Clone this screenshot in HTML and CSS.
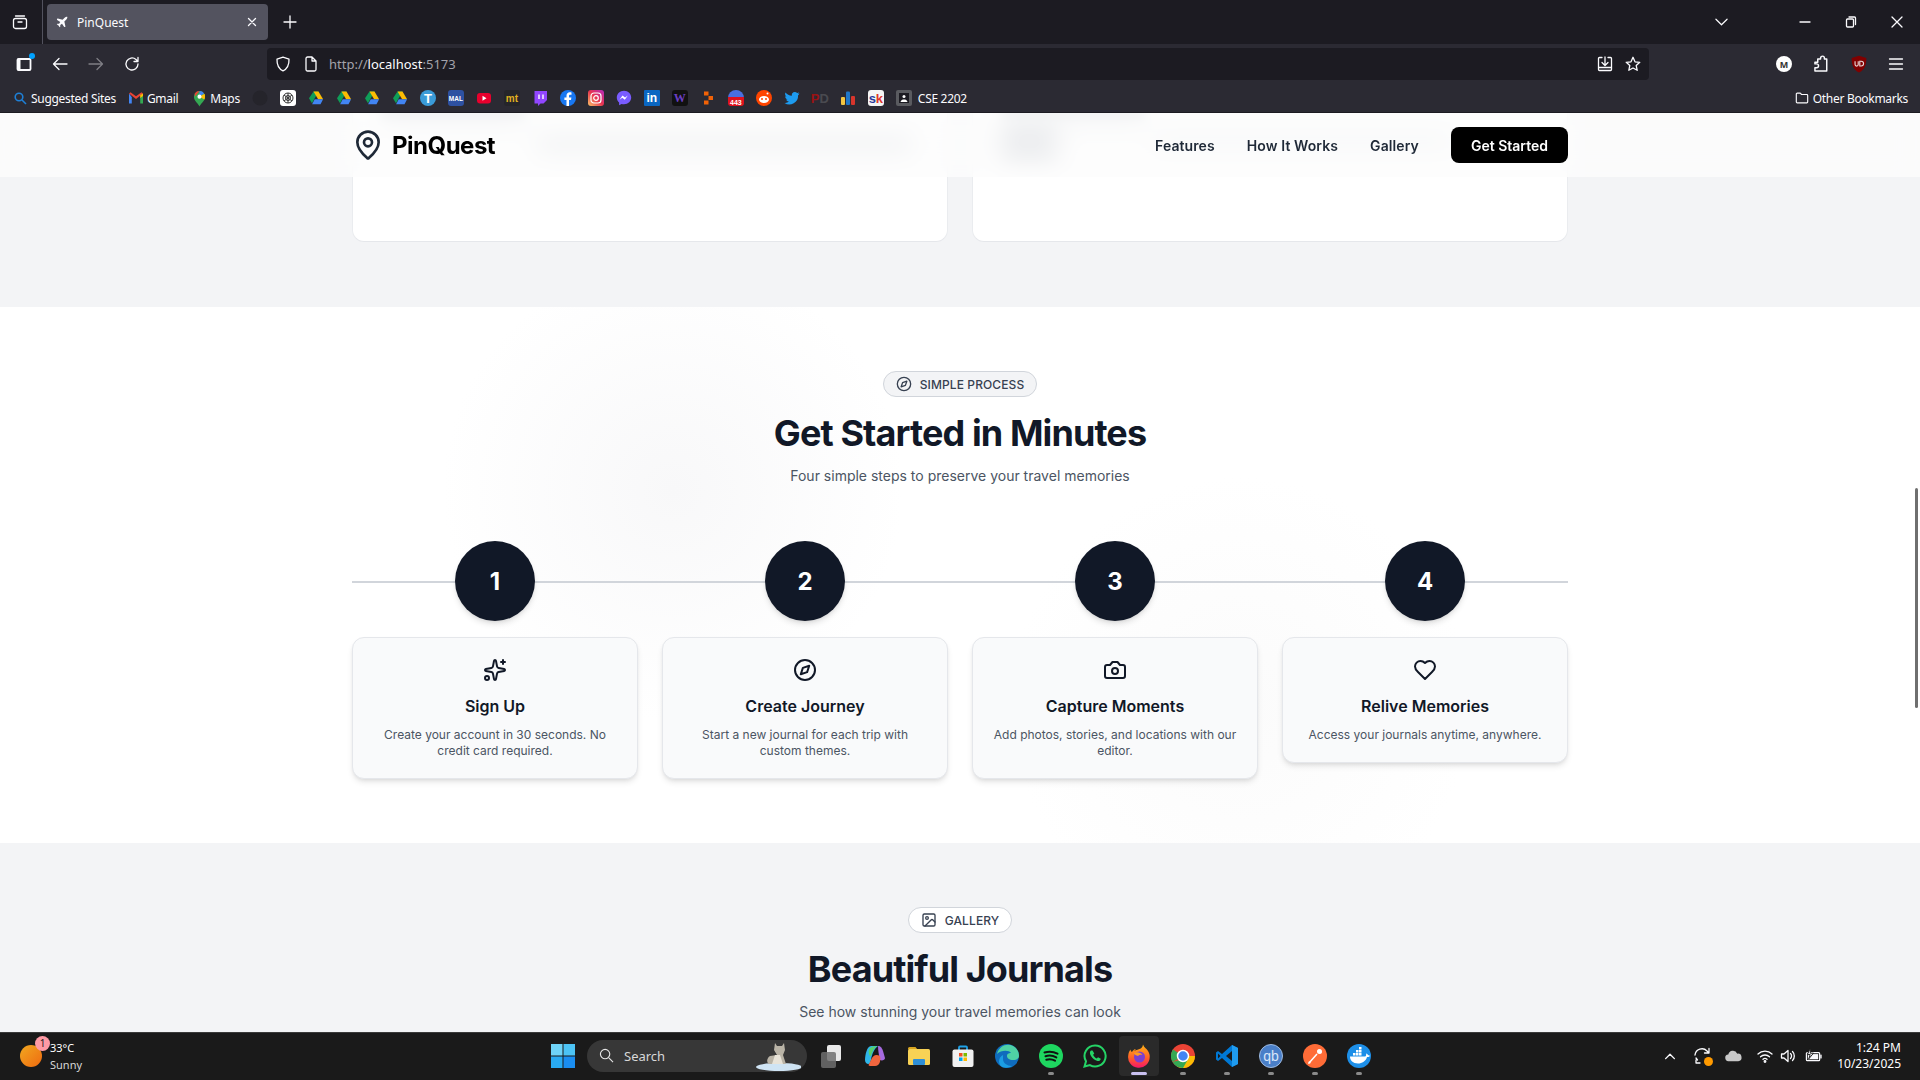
FILE: index.html
```html
<!DOCTYPE html>
<html lang="en">
<head>
<meta charset="utf-8">
<title>PinQuest</title>
<link rel="stylesheet" href="styles.css">
</head>
<body>
<svg class="defs" aria-hidden="true">
  <symbol id="drive" viewBox="0 0 16 16">
    <path d="M5.5 1.5h5L6.6 8.6 4 13.2 1 8.2z" fill="#0f9d58"/>
    <path d="M5.5 1.5h5l4.6 7.7h-5z" fill="#fbbc04"/>
    <path d="M4.1 14.2l2.6-5h8.4l-2.6 5z" fill="#4285f4"/>
  </symbol>
  <symbol id="compass" viewBox="0 0 24 24"><circle cx="12" cy="12" r="10"/><path d="m16.24 7.76-2.12 6.36-6.36 2.12 2.12-6.36 6.36-2.12z"/></symbol>
</svg>

<header class="browser">
  <div class="tabstrip">
    <div class="tablist-btn">
      <svg class="ico16 line" viewBox="0 0 16 16"><rect x="1.5" y="4.5" width="13" height="10" rx="2"/><path d="M3.5 2h9M6 8h4"/></svg>
    </div>
    <div class="tab">
      <svg class="ico14 solid" viewBox="0 0 24 24"><path d="M17.8 19.2 16 11l3.5-3.5C21 6 21.5 4 21 3c-1-.5-3 0-4.5 1.5L13 8 4.8 6.2c-.5-.1-.9.1-1.1.5l-.3.5c-.2.5-.1 1 .3 1.3L9 12l-2 3H4l-1 1 3 2 2 3 1-1v-3l3-2 3.5 5.3c.3.4.8.5 1.3.3l.5-.2c.4-.3.6-.7.5-1.2z"/></svg>
      <span class="tab-title">PinQuest</span>
      <svg class="tab-close line" viewBox="0 0 10 10"><path d="M1.5 1.5l7 7M8.5 1.5l-7 7"/></svg>
    </div>
    <svg class="tab-new line" viewBox="0 0 14 14"><path d="M7 1v12M1 7h12"/></svg>
    <div class="win-controls">
      <svg class="tabs-chevron line" viewBox="0 0 14 8"><path d="M1 1l6 6 6-6"/></svg>
      <svg class="wc wc-min line" viewBox="0 0 12 12"><path d="M1 6h10"/></svg>
      <svg class="wc wc-restore line" viewBox="0 0 12 12"><rect x="1.5" y="3" width="7" height="8" rx="1"/><path d="M4 1h5.5a1 1 0 0 1 1 1v6.5"/></svg>
      <svg class="wc wc-close line" viewBox="0 0 12 12"><path d="M1 1l10 10M11 1L1 11"/></svg>
    </div>
  </div>

  <div class="toolbar">
    <div class="nav-btns">
      <span class="tb-slot sidebar-wrap">
        <svg class="ico16 line thick" viewBox="0 0 16 16"><rect x="1.5" y="3" width="13" height="11" rx="1"/><path d="M3 4v9" class="thick-bar"/></svg>
        <i class="blue-dot"></i>
      </span>
      <span class="tb-slot"><svg class="ico16 line" viewBox="0 0 16 16"><path d="M15 8H1.5M7 2.5L1.5 8 7 13.5"/></svg></span>
      <span class="tb-slot dim"><svg class="ico16 line" viewBox="0 0 16 16"><path d="M1 8h13.5M9 2.5L14.5 8 9 13.5"/></svg></span>
      <span class="tb-slot"><svg class="ico16 line" viewBox="0 0 16 16"><path d="M14 8a6 6 0 1 1-2-4.5L14 5.5M14 1.5v4h-4"/></svg></span>
    </div>
    <div class="urlbar">
      <svg class="ico16 line url-shield" viewBox="0 0 16 16"><path d="M8 1.2l6 2c.2 5.5-1.5 9.500-6 11.600C3.500 12.700 1.800 8.700 2 3.200z"/></svg>
      <svg class="ico16 line url-doc" viewBox="0 0 16 16"><path d="M3 2.500A1.500 1.500 0 0 1 4.500 1H9l4 4v8.500a1.500 1.500 0 0 1-1.500 1.500h-7A1.500 1.500 0 0 1 3 13.500zM9 1v4h4"/></svg>
      <span class="url-text"><span class="url-dim">http://</span>localhost<span class="url-dim">:5173</span></span>
      <svg class="ico16 line url-download" viewBox="0 0 16 16"><path d="M5 1.500H2.500a1 1 0 0 0-1 1v11a1 1 0 0 0 1 1h11a1 1 0 0 0 1-1v-11a1 1 0 0 0-1-1H11M8 1v8M5 6.500L8 9.500l3-3M1.500 11.500h13"/></svg>
      <svg class="ico16 line url-star" viewBox="0 0 16 16"><path d="M8 1.300l2 4.500 4.800.5-3.600 3.200 1 4.800L8 12l-4.200 2.300 1-4.800L1.200 6.300 6 5.800z"/></svg>
    </div>
    <div class="tb-right">
      <span class="tb-icon"><span class="m-badge">M</span></span>
      <span class="tb-icon"><svg class="ico18 line tb-puzzle" viewBox="0 0 16 16"><path d="M6 3.500h2.500V2.700a1.700 1.700 0 0 1 3.400 0v.8H14v10.800H3.500v-3H5a1.700 1.700 0 0 0 0-3.400H3.500V6.500H6z"/></svg></span>
      <span class="tb-icon"><svg class="ico18" viewBox="0 0 16 16"><path d="M8 .6l6.500 2c.2 6-1.500 10.500-6.500 13C3 13.100 1.300 8.600 1.500 2.600z" fill="#800000"/><path d="M4.500 5.500v3a1.400 1.400 0 0 0 2.800 0v-3M8.700 5.500v4.300h1.200a2.100 2.100 0 0 0 0-4.300z" fill="none" stroke="#e8d6d6" stroke-width="1"/></svg></span>
      <span class="tb-icon"><svg class="ico16 line" viewBox="0 0 16 16"><path d="M1.500 3h13M1.500 8h13M1.500 13h13"/></svg></span>
    </div>
  </div>

  <div class="bookmarks">
    <span class="bm"><svg class="ico14 bm-search" viewBox="0 0 14 14"><circle cx="6" cy="6" r="3.800"/><path d="M9 9l4 4"/></svg>Suggested Sites</span>
    <span class="bm"><svg class="ico14" viewBox="1 2 14 12"><path d="M1 3.500v10h2.800V7.200z" fill="#4285f4"/><path d="M15 3.500v10h-2.800V7.200z" fill="#34a853"/><path d="M1 3.500l7 5.500 7-5.500-1.500-1.300L8 6.300 2.500 2.200z" fill="#ea4335"/><path d="M12.200 5.100L15 3.500V6l-2.800 2z" fill="#fbbc04"/></svg>Gmail</span>
    <span class="bm bm-maps"><svg class="bm-pin" viewBox="0 0 14 18"><path d="M7 17.500c-1-3-6-6-6-10.500A6 6 0 0 1 13 7c0 4.500-5 7.500-6 10.500z" fill="#34a853"/><path d="M2 3.500A6 6 0 0 1 7 1l-5 6z" fill="#ea4335"/><path d="M7 1a6 6 0 0 1 5 2.600L7 7z" fill="#4285f4"/><path d="M12.300 4A6 6 0 0 1 13 7c0 1-.300 2-.800 3L7 7z" fill="#fbbc04"/><circle cx="7" cy="7" r="2.200" fill="#fff"/></svg>Maps</span>
    <div class="bm-icons">
      <span class="bm-slot"><svg class="ico16" viewBox="0 0 16 16"><circle cx="8" cy="8" r="7.500" fill="#25242b"/></svg></span>
      <span class="bm-slot"><span class="fav fav-white"><svg class="ico12" viewBox="0 0 12 12" fill="none" stroke="#333" stroke-width="1"><circle cx="6" cy="6" r="5"/><circle cx="6" cy="6" r="2.500"/><path d="M2 3l8 6M10 3L2 9M6 1v10"/></svg></span></span>
      <span class="bm-slot"><svg class="ico16"><use href="#drive"/></svg></span>
      <span class="bm-slot"><svg class="ico16"><use href="#drive"/></svg></span>
      <span class="bm-slot"><svg class="ico16"><use href="#drive"/></svg></span>
      <span class="bm-slot"><svg class="ico16"><use href="#drive"/></svg></span>
      <span class="bm-slot"><span class="fav fav-round fav-t">T</span></span>
      <span class="bm-slot"><span class="fav fav-mal">MAL</span></span>
      <span class="bm-slot"><svg class="ico16" viewBox="0 0 16 16"><rect x="1" y="3" width="14" height="10.500" rx="3" fill="#e8002d"/><path d="M6.500 5.800v5l4-2.500z" fill="#fff"/></svg></span>
      <span class="bm-slot"><span class="fav fav-mt">mt</span></span>
      <span class="bm-slot"><svg class="ico16" viewBox="0 0 16 16"><path d="M2.500 1H15v9l-3.500 3.500H8.500L6 16v-2.500H2.500z" fill="#9146ff"/><path d="M7 4.500v4.500M11 4.500v4.500" stroke="#fff" stroke-width="1.400"/></svg></span>
      <span class="bm-slot"><svg class="ico16" viewBox="0 0 16 16"><circle cx="8" cy="8" r="8" fill="#1877f2"/><path d="M9 16v-6h2l.4-2.500H9V6c0-.8.300-1.300 1.400-1.300h1.100V2.500C11 2.400 10.400 2.300 9.800 2.300 7.800 2.300 6.500 3.500 6.500 5.700v1.800H4.400V10h2.100v6z" fill="#fff"/></svg></span>
      <span class="bm-slot"><span class="fav fav-ig"><svg class="ico12" viewBox="0 0 12 12" fill="none" stroke="#fff" stroke-width="1.200"><rect x="1" y="1" width="10" height="10" rx="3"/><circle cx="6" cy="6" r="2.300"/></svg></span></span>
      <span class="bm-slot"><svg class="ico16" viewBox="0 0 16 16"><path d="M8 .8C3.800.8.800 3.800.8 7.600c0 2 .8 3.800 2.300 5v2.700l2.500-1.400c.8.200 1.600.4 2.400.4 4.200 0 7.200-3 7.200-6.700S12.200.8 8 .8z" fill="#7a5cff"/><path d="M3.500 9.800l3-4.300 2.500 2 2.800-2-3 4.300-2.500-2z" fill="#fff"/></svg></span>
      <span class="bm-slot"><span class="fav fav-in">in</span></span>
      <span class="bm-slot"><span class="fav fav-w">W</span></span>
      <span class="bm-slot"><svg class="ico16" viewBox="0 0 16 16" fill="#f26207"><rect x="4" y="1.500" width="4.500" height="4"/><rect x="8.500" y="6" width="4.500" height="4"/><rect x="4" y="10.500" width="4.500" height="4"/></svg></span>
      <span class="bm-slot"><span class="fav fav-443">443</span></span>
      <span class="bm-slot"><svg class="ico16" viewBox="0 0 16 16"><circle cx="8" cy="8" r="8" fill="#ff4500"/><ellipse cx="8" cy="9.500" rx="5" ry="3.500" fill="#fff"/><circle cx="6" cy="9" r="1" fill="#ff4500"/><circle cx="10" cy="9" r="1" fill="#ff4500"/><circle cx="11.500" cy="3.500" r="1" fill="#fff"/></svg></span>
      <span class="bm-slot"><svg class="ico16" viewBox="0 0 16 16"><path d="M15.500 3.400c-.6.300-1.200.400-1.800.500.6-.4 1.100-1 1.400-1.700-.6.400-1.300.600-2 .8a3.100 3.100 0 0 0-5.300 2.800C5.200 5.700 3 4.500 1.500 2.600c-.8 1.400-.4 3.200 1 4.100-.5 0-1-.2-1.400-.4 0 1.500 1 2.800 2.500 3.100-.5.100-.9.100-1.400 0 .4 1.300 1.600 2.100 2.900 2.200A6.300 6.300 0 0 1 .5 13a8.800 8.800 0 0 0 13.600-7.800c.6-.4 1-.9 1.400-1.800z" fill="#1d9bf0"/></svg></span>
      <span class="bm-slot"><span class="fav-pd"><span class="pd-p">P</span><span class="pd-d">D</span></span></span>
      <span class="bm-slot"><svg class="ico16" viewBox="0 0 16 16"><rect x="1" y="7" width="4" height="8" rx="1" fill="#f4c542"/><rect x="6" y="1.500" width="4" height="13.500" rx="1" fill="#1f77c9"/><rect x="11" y="6" width="4" height="9" rx="1" fill="#d8352c"/></svg></span>
      <span class="bm-slot"><span class="fav fav-sk"><span class="sk-s">s</span><span class="sk-k">k</span></span></span>
      <span class="bm-slot"><svg class="ico16" viewBox="0 0 16 16"><rect width="16" height="16" rx="2" fill="#5a5b60"/><rect x="3" y="3" width="10" height="10" fill="#1c1b22"/><circle cx="8" cy="6.500" r="1.500" fill="#fff"/><path d="M4.500 12c.5-2 2-2.500 3.500-2.500s3 .5 3.500 2.500z" fill="#fff"/></svg></span>
    </div>
    <span class="bm bm-cse">CSE 2202</span>
    <span class="bm bm-other"><svg class="ico14 line" viewBox="0 0 16 16"><path d="M1.500 3.500a1 1 0 0 1 1-1h3.500l1.500 1.500h6a1 1 0 0 1 1 1v7.500a1 1 0 0 1-1 1h-11a1 1 0 0 1-1-1z"/></svg>Other Bookmarks</span>
  </div>
</header>

<main class="page">
  <nav class="site-nav">
    <div class="site-nav-inner">
      <div class="brand">
        <svg class="brand-pin" viewBox="0 0 24 24"><path d="M20 10c0 4.993-5.539 10.193-7.399 11.799a1 1 0 0 1-1.202 0C9.539 20.193 4 14.993 4 10a8 8 0 0 1 16 0"/><circle cx="12" cy="10" r="3"/></svg>
        <span class="brand-name">PinQuest</span>
      </div>
      <div class="nav-links">
        <a class="nav-link">Features</a>
        <a class="nav-link">How It Works</a>
        <a class="nav-link">Gallery</a>
        <a class="nav-cta">Get Started</a>
      </div>
    </div>
  </nav>

  <section class="band band-features">
    <div class="container feature-grid">
      <div class="feature-card">
        <div class="ghost ghost-a"></div>
        <div class="ghost ghost-b"></div>
      </div>
      <div class="feature-card">
        <div class="ghost ghost-a"></div>
        <div class="ghost-row">
          <div class="ghost ghost-c"></div>
          <div class="ghost ghost-d"></div>
        </div>
      </div>
    </div>
  </section>

  <section class="band band-steps">
    <div class="container">
      <div class="section-head">
        <div class="pill pill-grey"><svg class="pill-ico"><use href="#compass"/></svg>SIMPLE PROCESS</div>
        <h2 class="section-title">Get Started in Minutes</h2>
        <p class="section-sub">Four simple steps to preserve your travel memories</p>
      </div>
      <div class="steps">
        <div class="steps-line"></div>
        <article class="step">
          <div class="step-num">1</div>
          <div class="step-card">
            <svg class="step-ico" viewBox="0 0 24 24"><path d="M11.017 2.814a1 1 0 0 1 1.966 0l1.051 5.558a2 2 0 0 0 1.594 1.594l5.558 1.051a1 1 0 0 1 0 1.966l-5.558 1.051a2 2 0 0 0-1.594 1.594l-1.051 5.558a1 1 0 0 1-1.966 0l-1.051-5.558a2 2 0 0 0-1.594-1.594l-5.558-1.051a1 1 0 0 1 0-1.966l5.558-1.051a2 2 0 0 0 1.594-1.594z"/><path d="M20 2v4"/><path d="M22 4h-4"/><circle cx="4" cy="20" r="2"/></svg>
            <h3 class="step-title">Sign Up</h3>
            <p class="step-text">Create your account in 30 seconds. No credit card required.</p>
          </div>
        </article>
        <article class="step">
          <div class="step-num">2</div>
          <div class="step-card">
            <svg class="step-ico"><use href="#compass"/></svg>
            <h3 class="step-title">Create Journey</h3>
            <p class="step-text">Start a new journal for each trip with custom themes.</p>
          </div>
        </article>
        <article class="step">
          <div class="step-num">3</div>
          <div class="step-card">
            <svg class="step-ico" viewBox="0 0 24 24"><path d="M14.5 4h-5L7 7H4a2 2 0 0 0-2 2v9a2 2 0 0 0 2 2h16a2 2 0 0 0 2-2V9a2 2 0 0 0-2-2h-3l-2.500-3z"/><circle cx="12" cy="13" r="3"/></svg>
            <h3 class="step-title">Capture Moments</h3>
            <p class="step-text">Add photos, stories, and locations with our editor.</p>
          </div>
        </article>
        <article class="step">
          <div class="step-num">4</div>
          <div class="step-card">
            <svg class="step-ico" viewBox="0 0 24 24"><path d="M19 14c1.490-1.460 3-3.210 3-5.500A5.500 5.500 0 0 0 16.500 3c-1.760 0-3 .5-4.500 2-1.500-1.500-2.740-2-4.500-2A5.500 5.500 0 0 0 2 8.500c0 2.300 1.500 4.050 3 5.500l7 7Z"/></svg>
            <h3 class="step-title">Relive Memories</h3>
            <p class="step-text">Access your journals anytime, anywhere.</p>
          </div>
        </article>
      </div>
    </div>
  </section>

  <section class="band band-gallery">
    <div class="container">
      <div class="section-head">
        <div class="pill pill-white"><svg class="pill-ico" viewBox="0 0 24 24"><rect width="18" height="18" x="3" y="3" rx="2" ry="2"/><circle cx="9" cy="9" r="2"/><path d="m21 15-3.086-3.086a2 2 0 0 0-2.828 0L6 21"/></svg>GALLERY</div>
        <h2 class="section-title">Beautiful Journals</h2>
        <p class="section-sub">See how stunning your travel memories can look</p>
      </div>
    </div>
  </section>
  <div class="scroll-thumb"></div>
</main>

<footer class="taskbar">
  <div class="tk-weather">
    <span class="tk-sun"><i class="tk-badge">1</i></span>
    <span class="tk-temp"><b>33°C</b><span>Sunny</span></span>
  </div>
  <svg class="tk-win" viewBox="0 0 24 24"><rect width="11.500" height="11.500" fill="#6fd3f7"/><rect x="12.500" width="11.500" height="11.500" fill="#4cc3f4"/><rect y="12.500" width="11.500" height="11.500" fill="#29aaf1"/><rect x="12.500" y="12.500" width="11.500" height="11.500" fill="#1a8df0"/></svg>
  <div class="tk-search">
    <svg class="tk-search-ico" viewBox="0 0 16 16"><circle cx="6.500" cy="6.500" r="5"/><path d="M10.500 10.500L15 15"/></svg>
    <span class="tk-search-text">Search</span>
    <svg class="tk-leopard" viewBox="0 0 46 30"><ellipse cx="24" cy="26" rx="23" ry="4" fill="#cfe4f4"/><path d="M20 2l2 3h5l2-3 1 7-2 5 3 9H14c-3-2-2-6 1-8l7-1-3-5z" fill="#b9b3a6"/><path d="M20 14l-3 9h11l-3-9z" fill="#e8e3d8"/></svg>
  </div>
  <div class="tk-apps">
    <span class="tk-app"><svg class="tk-ico" viewBox="0 0 24 24"><rect x="8" y="1" width="14" height="16" rx="2" fill="#e8e8e8"/><rect x="2" y="8" width="15" height="16" rx="2" fill="#6e6e6e" opacity=".85"/></svg></span>
    <span class="tk-app"><svg class="tk-ico" viewBox="0 0 24 24"><path d="M8 2h7c-3 2-6 7-7 14l-1 3c-1 2-5 1-5-3 0-5 2-14 6-14z" fill="#2fb5e8"/><path d="M15 2c3 0 4 2 5 5l2 7c0 2-3 3-5 2-1-4-2-10-2-14z" fill="#a66be0"/><path d="M8 16c2-5 5-6 9-4 1 4 0 10-5 10H7c-1 0-2-1-1-2z" fill="#f0653e"/><path d="M6 6c1-3 4-4 8-4-3 2-5 6-6 10-1 1-3-3-2-6z" fill="#57d06c"/></svg></span>
    <span class="tk-app"><svg class="tk-ico" viewBox="0 0 24 24"><path d="M1 4.500a1.500 1.500 0 0 1 1.500-1.500h6l2 2.500H1z" fill="#d9a520"/><rect x="1" y="5" width="22" height="16" rx="1.500" fill="#f8d255"/><rect x="6" y="15" width="12" height="6" rx="1" fill="#2f8fd6"/></svg></span>
    <span class="tk-app"><svg class="tk-ico" viewBox="0 0 24 24"><path d="M8 6V3.500a1 1 0 0 1 1-1h6a1 1 0 0 1 1 1V6" fill="none" stroke="#1fa2e8" stroke-width="1.800"/><rect x="1.500" y="5.500" width="21" height="17.500" rx="2" fill="#f1f1f1"/><rect x="8" y="9" width="3.500" height="3.500" fill="#f25022"/><rect x="12.500" y="9" width="3.500" height="3.500" fill="#7fba00"/><rect x="8" y="13.500" width="3.500" height="3.500" fill="#00a4ef"/><rect x="12.500" y="13.500" width="3.500" height="3.500" fill="#ffb900"/></svg></span>
    <span class="tk-app"><svg class="tk-ico" viewBox="0 0 24 24"><circle cx="12" cy="12" r="12" fill="#0f6cbd"/><path d="M2 10C4 2 12-1 18 2c4 2 6 6 6 10 0 3-3 4-6 4-4 0-6-2-6-4 0-3 3-3 4-3-2-3-10-3-14 1z" fill="#4fd1a5"/><path d="M8 15c0 4 4 7 9 7-3 2-9 3-12-1-2-3-1-8 3-10z" fill="#1b9de2"/></svg></span>
    <span class="tk-app tk-dot"><svg class="tk-ico" viewBox="0 0 24 24"><circle cx="12" cy="12" r="12" fill="#1ed760"/><path d="M5.500 8.500c4-1.300 9-1 13 1.200M6.500 12.200c3.500-1 7.500-.7 10.800 1.200M7.300 15.700c3-.8 6-.5 8.700 1" fill="none" stroke="#111" stroke-width="2" stroke-linecap="round"/></svg></span>
    <span class="tk-app"><svg class="tk-ico" viewBox="0 0 24 24"><path d="M12 1.500a10.500 10.500 0 0 0-9 15.800L1.500 22.500l5.400-1.400A10.500 10.500 0 1 0 12 1.500z" fill="none" stroke="#25d366" stroke-width="2"/><path d="M8 6.500c-1.500 1.200-1.500 3 0 5.500s4 4.500 6.500 5c2 .3 3.300-1 3.300-2.300l-2.800-1.500-1.200 1.300c-1.500-.5-3-2-3.700-3.700l1.200-1.200L9.500 6.500z" fill="#25d366"/></svg></span>
    <span class="tk-app tk-active"><svg class="tk-ico" viewBox="0 0 24 24"><defs><linearGradient id="ffg" x1="0" y1="0" x2="0" y2="1"><stop offset="0" stop-color="#ffb515"/><stop offset=".6" stop-color="#ff5a2a"/><stop offset="1" stop-color="#f5156c"/></linearGradient></defs><path d="M16 .5c1 3 3.500 4 5 6.500 2 3.500 1.700 5 1.700 6a10.800 10.800 0 1 1-21.400-2c.2-2 1-4 2.300-5.500 0 1 .5 2 1.300 2.500C6 6 8 4.500 9 5c-1 .7-1.500 1.500-1.500 2C10 5 15.500 6 16 .5z" fill="url(#ffg)"/><circle cx="12.500" cy="13" r="5.500" fill="#7a3fd0"/><path d="M7 9c3-1.500 7-.5 8.500 2-2-.5-3.500 0-4.500 1-2-.5-3.500-1.500-4-3z" fill="#ff9a1f"/></svg></span>
    <span class="tk-app tk-dot"><svg class="tk-ico" viewBox="0 0 24 24"><circle cx="12" cy="12" r="12" fill="#ea4335"/><path d="M12 12L1.600 18A12 12 0 0 1 2 5.500z" fill="#34a853"/><path d="M12 12h12a12 12 0 0 1-18 10.400z" fill="#fbbc04"/><path d="M1.600 18A12 12 0 0 0 12 24l6-10.400z" fill="#34a853"/><circle cx="12" cy="12" r="5.500" fill="#4285f4" stroke="#fff" stroke-width="1.500"/></svg></span>
    <span class="tk-app tk-dot"><svg class="tk-ico" viewBox="0 0 24 24"><path d="M17 1l6 3v16l-6 3L7 14l-4 3-2-1.500V8.500L3 7l4 3z" fill="#0078d4"/><path d="M17 1l6 3v16l-6 3z" fill="#1f9cf0"/><path d="M17 7l-6 5 6 5z" fill="#1a1a1a"/><path d="M3 9.500v5l2.500-2.500z" fill="#1a1a1a"/></svg></span>
    <span class="tk-app tk-dot"><span class="tk-qb">qb</span></span>
    <span class="tk-app tk-dot"><svg class="tk-ico" viewBox="0 0 24 24"><circle cx="12" cy="12" r="12" fill="#ff6c37"/><path d="M6 19l8-9M15 6l3 3" fill="none" stroke="#fff" stroke-width="1.500"/><circle cx="16.500" cy="7.500" r="2.500" fill="#fff"/><path d="M5 20l1-3 2 2z" fill="#fff"/></svg></span>
    <span class="tk-app tk-dot"><svg class="tk-ico" viewBox="0 0 24 24"><circle cx="12" cy="12" r="12" fill="#1d8fe8"/><path d="M3 12.500h15c1 0 1.500-1.500 1-3 1 .3 2 .8 2.300 1.800 1 0 1.500.3 1.700.7-1 1-2 1-3 1-1 4-5 6.500-9 6.500-5 0-8-3-8-7z" fill="#fff"/><path d="M6 9h2.500v2.500H6zM9 9h2.500v2.500H9zM12 9h2.500v2.500H12zM9 6h2.500v2.500H9zM12 6h2.500v2.500H12zM12 3h2.500v2.500H12z" fill="#fff"/></svg></span>
  </div>
  <div class="tk-tray">
    <svg class="tray-ico tray-chev line" viewBox="0 0 16 16"><path d="M3 11l5-5 5 5"/></svg>
    <span class="tray-slot tray-sync">
      <svg class="ico18 line" viewBox="0 0 18 18"><path d="M2 8a7 7 0 0 1 12-4l2 2M16 1.500V6h-4.500M3 11l1.500 2M7 16H3v-3"/></svg>
      <i class="sync-dot"></i>
    </span>
    <svg class="tray-ico tray-cloud" viewBox="0 0 18 12"><path d="M4 11.500a3.500 3.500 0 0 1-.5-7A5 5 0 0 1 13 3.500a4 4 0 0 1 1 8z" fill="#c8c8c8"/></svg>
    <svg class="tray-ico tray-wifi line" viewBox="0 0 16 16"><path d="M1 6a10 10 0 0 1 14 0M3.500 8.800a6.500 6.500 0 0 1 9 0M6 11.300a3 3 0 0 1 4 0"/><circle cx="8" cy="13.500" r=".8"/></svg>
    <svg class="tray-ico tray-vol line" viewBox="0 0 16 16"><path d="M1.500 6v4h2.500l4 3.500v-11L4 6zM10.500 5.500a3.500 3.500 0 0 1 0 5M12.500 3.500a6.500 6.500 0 0 1 0 9"/></svg>
    <svg class="tray-ico tray-bat line" viewBox="0 0 18 16"><path d="M5 4.500h9.500a1 1 0 0 1 1 1V12a1 1 0 0 1-1 1H2.500a1 1 0 0 1-1-1V5.500a1 1 0 0 1 1-1M17 7v3"/><rect class="bat-fill" x="3" y="6" width="11" height="5.500"/><path class="bat-bolt" d="M5.500 0L2.500 6.500h3L4 11l5-6H6z"/></svg>
    <div class="tk-clock"><span>1:24 PM</span><span>10/23/2025</span></div>
  </div>
</footer>
</body>
</html>
```

FILE: styles.css
```css
* { box-sizing: border-box; }
html, body { margin: 0; padding: 0; }
body {
  width: 1920px;
  height: 1080px;
  overflow: hidden;
  display: flex;
  flex-direction: column;
  font-family: Inter, "Noto Sans", sans-serif;
  background: #fff;
}
.defs { width: 0; height: 0; position: absolute; }
h2, h3, p { margin: 0; }

.ico12 { width: 12px; height: 12px; display: block; }
.ico14 { width: 14px; height: 14px; display: block; flex: none; }
.ico16 { width: 16px; height: 16px; display: block; flex: none; }
.ico18 { width: 18px; height: 18px; display: block; flex: none; }
.line { fill: none; stroke: #fbfbfe; stroke-width: 1.300; stroke-linecap: round; stroke-linejoin: round; }
.solid { fill: #fbfbfe; }

/* Browser */
.browser { flex: none; height: 113px; background: #2b2a33; color: #fbfbfe; font-family: "Noto Sans", sans-serif; border-bottom: 1px solid #1c1b22; }
.tabstrip { height: 44px; background: #1c1b22; display: flex; align-items: center; }
.tablist-btn { width: 43px; height: 44px; display: flex; align-items: center; justify-content: center; padding-right: 2px; border-right: 1px solid #52525e; }
.tab { margin-left: 4px; width: 221px; height: 36px; background: #53535f; border-radius: 4px; display: flex; align-items: center; padding: 0 11px 0 8px; gap: 8px; }
.tab-title { font-size: 12px; flex: 1; }
.tab-close { width: 10px; height: 10px; }
.tab-new { width: 14px; height: 14px; margin-left: 15px; }
.win-controls { margin-left: auto; display: flex; align-items: center; height: 44px; padding-right: 17px; }
.tabs-chevron { width: 13px; height: 8px; margin-right: 71px; }
.wc { width: 12px; height: 12px; }
.wc-min { margin-right: 34px; }
.wc-restore { margin-right: 34px; }
.wc-close { width: 12px; height: 12px; }

.toolbar { height: 36px; display: flex; align-items: flex-end; }
.nav-btns { width: 267px; display: flex; padding-left: 6px; }
.tb-slot { width: 36px; height: 32px; display: flex; align-items: center; justify-content: center; position: relative; }
.dim { opacity: .4; }
.thick { stroke-width: 1.800; }
.thick-bar { stroke-width: 3; }
.blue-dot { position: absolute; right: 7px; top: 5px; width: 6px; height: 6px; border-radius: 50%; background: #00a2ff; }
.urlbar { width: 1382px; height: 32px; background: #1c1b22; border-radius: 4px; display: flex; align-items: center; padding: 0 8px; }
.url-shield { margin-right: 12px; }
.url-doc { margin-right: 10px; }
.url-text { font-size: 13px; color: #fbfbfe; flex: 1; }
.url-dim { color: #a3a3ab; }
.url-download { margin-right: 12px; }
.tb-right { display: flex; margin-left: 117px; }
.tb-icon { width: 37px; height: 32px; display: flex; align-items: center; justify-content: center; }
.tb-puzzle { margin-left: -3px; }
.m-badge { width: 16px; height: 16px; border-radius: 50%; background: #fff; color: #333; font-size: 9px; font-weight: 700; display: flex; align-items: center; justify-content: center; margin-left: -1px; }

.bookmarks { height: 32px; padding-top: 4px; display: flex; align-items: center; font-size: 12px; padding-left: 13px; letter-spacing: -.3px; }
.bm { display: flex; align-items: center; gap: 4px; white-space: nowrap; }
.bm + .bm { margin-left: 13px; }
.bm + .bm.bm-maps { margin-left: 15px; }
.bm-search { fill: none; stroke: #1e7fd6; stroke-width: 1.600; }
.bm-pin { width: 13px; height: 17px; display: block; flex: none; }
.bm-icons { display: flex; margin-left: 6px; }
.bm-slot { width: 28px; height: 32px; display: flex; align-items: center; justify-content: center; }
.bm + .bm.bm-cse { margin-left: -11px; }
.bm + .bm.bm-other { margin-left: auto; margin-right: 12px; }
.fav { width: 16px; height: 16px; border-radius: 3px; display: flex; align-items: center; justify-content: center; font-weight: 700; letter-spacing: 0; font-family: "Liberation Sans", sans-serif; }
.fav-white { background: #fff; }
.fav-round { border-radius: 50%; }
.fav-t { background: #3a9bd8; color: #fff; font-size: 13px; }
.fav-mal { background: #2e51a2; color: #fff; font-size: 6.500px; }
.fav-mt { background: #25252a; color: #e0b020; font-size: 10px; }
.fav-ig { background: linear-gradient(45deg, #fdc468, #e8344f 50%, #b52bc0); }
.fav-in { background: #0a66c2; color: #fff; font-size: 12px; border-radius: 1px; }
.fav-w { background: #111; color: #6b3fc4; font-size: 12px; font-family: "Liberation Serif", serif; }
.fav-443 { background: linear-gradient(#4a6fe0 45%, #e0121e 45%); color: #fff; font-size: 7px; border-radius: 50% 50% 3px 3px; align-items: flex-end; }
.fav-pd { font-family: "Liberation Sans", sans-serif; font-size: 13px; font-weight: 700; letter-spacing: 0; }
.pd-p { color: #9a1214; }
.pd-d { color: #4a4a50; }
.fav-sk { background: #f5f5f5; font-size: 13px; }
.sk-s { color: #2a3a9c; }
.sk-k { color: #e0352c; }

/* Page */
.page { flex: 1; position: relative; overflow: hidden; min-height: 0; }
.container { width: 1216px; margin: 0 auto; }
.band { padding: 64px 0; }
.site-nav { position: absolute; left: 0; right: 0; top: 0; z-index: 5; height: 64px; background: rgba(252, 252, 253, .8); backdrop-filter: blur(12px); }
.site-nav-inner { width: 1216px; height: 64px; margin: 0 auto; display: flex; align-items: center; justify-content: space-between; }
.brand { display: flex; align-items: center; gap: 8px; }
.brand-pin { width: 32px; height: 32px; fill: none; stroke: #1f2937; stroke-width: 2; stroke-linecap: round; stroke-linejoin: round; }
.brand-name { font-size: 24px; font-weight: 700; color: #000; letter-spacing: -.5px; }
.nav-links { display: flex; align-items: center; gap: 32px; }
.nav-link { font-size: 14px; font-weight: 600; color: #1f2937; letter-spacing: .1px; }
.nav-cta { height: 36px; padding: 0 20px; border-radius: 8px; background: #000; color: #fff; font-size: 14px; font-weight: 600; display: flex; align-items: center; }

.band-features { background: #f3f4f6; height: 194px; padding: 0; }
.feature-grid { display: grid; grid-template-columns: 1fr 1fr; gap: 24px; }
.feature-card { height: 129px; background: #fff; border: 1px solid #eaecef; border-top: 0; border-bottom-color: #e5e7eb; border-radius: 0 0 12px 12px; overflow: hidden; }
.ghost { background: #9ca3af; filter: blur(5px); }
.ghost-a { width: 144px; height: 8px; margin-left: 28px; }
.ghost-b { width: 375px; height: 10px; margin: 18px 0 0 184px; }
.ghost-row { display: flex; margin-top: 8px; }
.ghost-c { width: 56px; height: 30px; margin-left: 28px; }
.ghost-d { width: 300px; height: 8px; margin: 8px 0 0 96px; opacity: .6; }

.band-steps {
  height: 536px;
  background:
    radial-gradient(circle at 673px 183px, #f8f8f9 0, rgba(255, 255, 255, 0) 230px),
    radial-gradient(circle at 1240px 400px, #fbfbfb 0, rgba(255, 255, 255, 0) 230px),
    #fff;
}
.band-gallery { background: #f3f4f6; }
.section-head { display: flex; flex-direction: column; align-items: center; text-align: center; }
.pill { height: 26px; padding: 0 12px; border: 1px solid #d1d5db; border-radius: 9999px; display: flex; align-items: center; gap: 8px; font-size: 12px; font-weight: 500; color: #374151; letter-spacing: .1px; }
.pill-grey { background: #f3f4f6; }
.pill-white { background: #fff; }
.pill-ico { width: 16px; height: 16px; fill: none; stroke: #374151; stroke-width: 2; stroke-linecap: round; stroke-linejoin: round; }
.section-title { margin-top: 16px; font-size: 36px; line-height: 40px; font-weight: 700; color: #111827; letter-spacing: -.9px; }
.section-sub { margin-top: 11px; font-size: 14px; line-height: 24px; color: #4b5563; }

.steps { position: relative; display: grid; grid-template-columns: repeat(4, 1fr); gap: 24px; align-items: start; margin-top: 53px; }
.steps-line { position: absolute; left: 0; right: 0; top: 40px; height: 2px; background: #d1d5db; }
.step { position: relative; display: flex; flex-direction: column; align-items: center; }
.step-num { width: 80px; height: 80px; border-radius: 50%; background: #111827; color: #fff; font-size: 24px; font-weight: 700; display: flex; align-items: center; justify-content: center; box-shadow: 0 4px 6px -1px rgba(0, 0, 0, .12), 0 2px 4px -2px rgba(0, 0, 0, .1); }
.step-card { width: 100%; margin-top: 16px; padding: 20px 20px 19px; background: #f9fafb; border: 1px solid #e5e7eb; border-radius: 12px; box-shadow: 0 4px 6px -1px rgba(0, 0, 0, .1), 0 2px 4px -2px rgba(0, 0, 0, .1); display: flex; flex-direction: column; align-items: center; text-align: center; }
.step-ico { width: 24px; height: 24px; display: block; fill: none; stroke: #111827; stroke-width: 2; stroke-linecap: round; stroke-linejoin: round; }
.step-title { margin-top: 10px; font-size: 16px; line-height: 28px; font-weight: 600; color: #111827; }
.step-text { margin-top: 7px; font-size: 12px; line-height: 16px; color: #4b5563; }

.scroll-thumb { position: absolute; right: 2px; top: 375px; width: 3px; height: 220px; border-radius: 2px; background: #6f6f6f; }

/* Taskbar */
.taskbar { flex: none; height: 48px; padding-bottom: 2px; background: #1a1a1a; border-top: 1px solid #3a3a3a; display: flex; align-items: center; color: #fff; font-family: "Noto Sans", sans-serif; }
.tk-weather { width: 551px; display: flex; align-items: center; padding-left: 20px; gap: 8px; }
.tk-sun { width: 22px; height: 22px; border-radius: 50%; background: linear-gradient(135deg, #f0a820, #ef6a10); position: relative; }
.tk-badge { position: absolute; right: -8px; top: -9px; width: 15px; height: 15px; border-radius: 50%; background: #ff9aa5; color: #1a1a1a; font-size: 10px; font-style: normal; display: flex; align-items: center; justify-content: center; }
.tk-temp { display: flex; flex-direction: column; font-size: 11px; line-height: 17px; color: #d8d8d8; }
.tk-temp b { font-weight: 400; color: #fff; }
.tk-win { width: 24px; height: 24px; flex: none; }
.tk-search { margin-left: 12px; width: 220px; height: 32px; border-radius: 16px; background: #373737; display: flex; align-items: center; padding-left: 12px; position: relative; overflow: hidden; }
.tk-search-ico { width: 15px; height: 15px; fill: none; stroke: #e6e6e6; stroke-width: 1.200; }
.tk-search-text { margin-left: 10px; font-size: 13px; color: #d8d8d8; }
.tk-leopard { position: absolute; right: 6px; bottom: 1px; width: 46px; height: 30px; }
.tk-apps { display: flex; margin-left: 2px; }
.tk-app { width: 44px; height: 40px; display: flex; align-items: center; justify-content: center; position: relative; }
.tk-ico { width: 24px; height: 24px; display: block; }
.tk-dot::after { content: ""; position: absolute; left: 19px; bottom: 1px; width: 6px; height: 3px; border-radius: 2px; background: #8a8a8a; }
.tk-active { width: 40px; margin: 0 2px; background: #2a2a2a; border-radius: 4px; }
.tk-active::after { content: ""; position: absolute; left: 12px; bottom: 1px; width: 16px; height: 3px; border-radius: 2px; background: #c9c0f0; }
.tk-qb { width: 24px; height: 24px; border-radius: 50%; background: #4a7fc8; color: #d8e6f8; border: 1px solid #9fbbe0; font-family: "Liberation Sans", sans-serif; font-size: 14px; display: flex; align-items: center; justify-content: center; }
.tk-tray { margin-left: auto; display: flex; align-items: center; padding-right: 19px; }
.tray-ico { display: block; flex: none; }
.tray-chev { width: 14px; height: 14px; stroke-width: 1.600; margin-right: 16px; }
.tray-slot { position: relative; width: 18px; height: 18px; margin-right: 14px; }
.sync-dot { position: absolute; right: -2px; bottom: -1px; width: 9px; height: 9px; border-radius: 50%; background: #ff9a00; }
.tray-cloud { width: 17px; height: 12px; margin-right: 15px; }
.tray-wifi { width: 16px; height: 16px; margin-right: 7px; }
.tray-vol { width: 16px; height: 16px; margin-right: 9px; }
.tray-bat { width: 17px; height: 16px; margin-right: 17px; }
.bat-fill { fill: #fbfbfe; stroke: none; }
.bat-bolt { fill: #fbfbfe; stroke: #1a1a1a; stroke-width: 1; }
.tk-clock { display: flex; flex-direction: column; align-items: flex-end; font-size: 12px; line-height: 16px; width: 62px; white-space: nowrap; }
```
